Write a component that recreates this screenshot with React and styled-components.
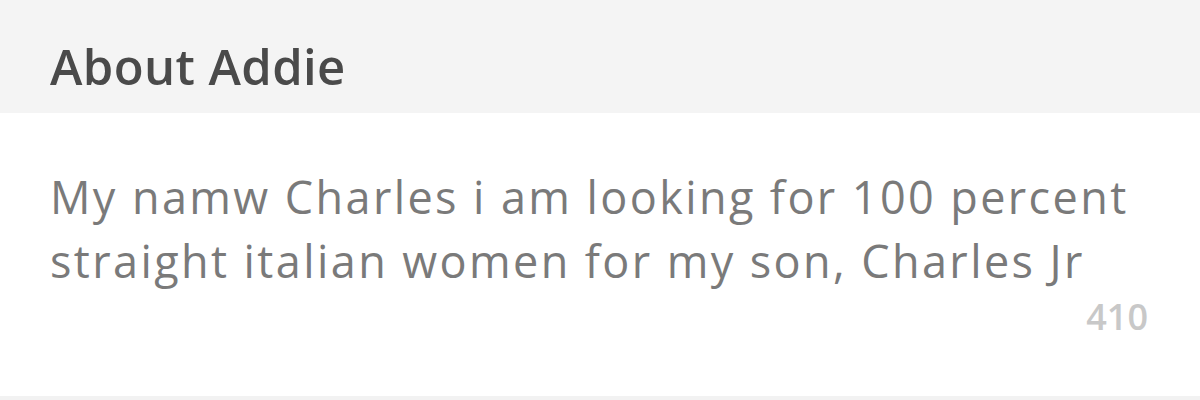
import styled, { createGlobalStyle } from 'styled-components';

const GlobalStyle = createGlobalStyle`
  html, body {
    margin: 0;
    padding: 0;
    background: #ffffff;
  }
  body {
    font-family: "Open Sans", Lato, sans-serif;
  }
`;

const Page = styled.div`
  width: 1200px;
  height: 400px;
  display: flex;
  flex-direction: column;
  overflow: hidden;
`;

const SectionHeader = styled.div`
  height: 113px;
  flex-shrink: 0;
  background: #f4f4f4;
  display: flex;
  align-items: flex-end;
  padding: 0 50px 22px;
  box-sizing: border-box;
`;

const Title = styled.h2`
  margin: 0;
  font-size: 49px;
  font-weight: 600;
  letter-spacing: 0.4px;
  color: #4a4a4a;
  line-height: 1;
`;

const Body = styled.div`
  flex: 1;
  padding: 52px 50px 0;
  display: flex;
  flex-direction: column;
  border-bottom: 4px solid #f2f2f2;
`;

const Bio = styled.p`
  margin: 0;
  font-size: 45px;
  line-height: 64px;
  letter-spacing: 2.4px;
  color: #7a7a7a;
  max-width: 1110px;
`;

const Counter = styled.span`
  align-self: flex-end;
  margin-right: 2px;
  margin-top: 6px;
  font-size: 36px;
  font-weight: 600;
  color: #c8c8c8;
  line-height: 1;
`;

export default function App() {
  return (
    <Page>
      <GlobalStyle />
      <SectionHeader>
        <Title>About Addie</Title>
      </SectionHeader>
      <Body>
        <Bio>
          My namw Charles i am looking for 100 percent straight italian women for my son, Charles Jr
        </Bio>
        <Counter>410</Counter>
      </Body>
    </Page>
  );
}
